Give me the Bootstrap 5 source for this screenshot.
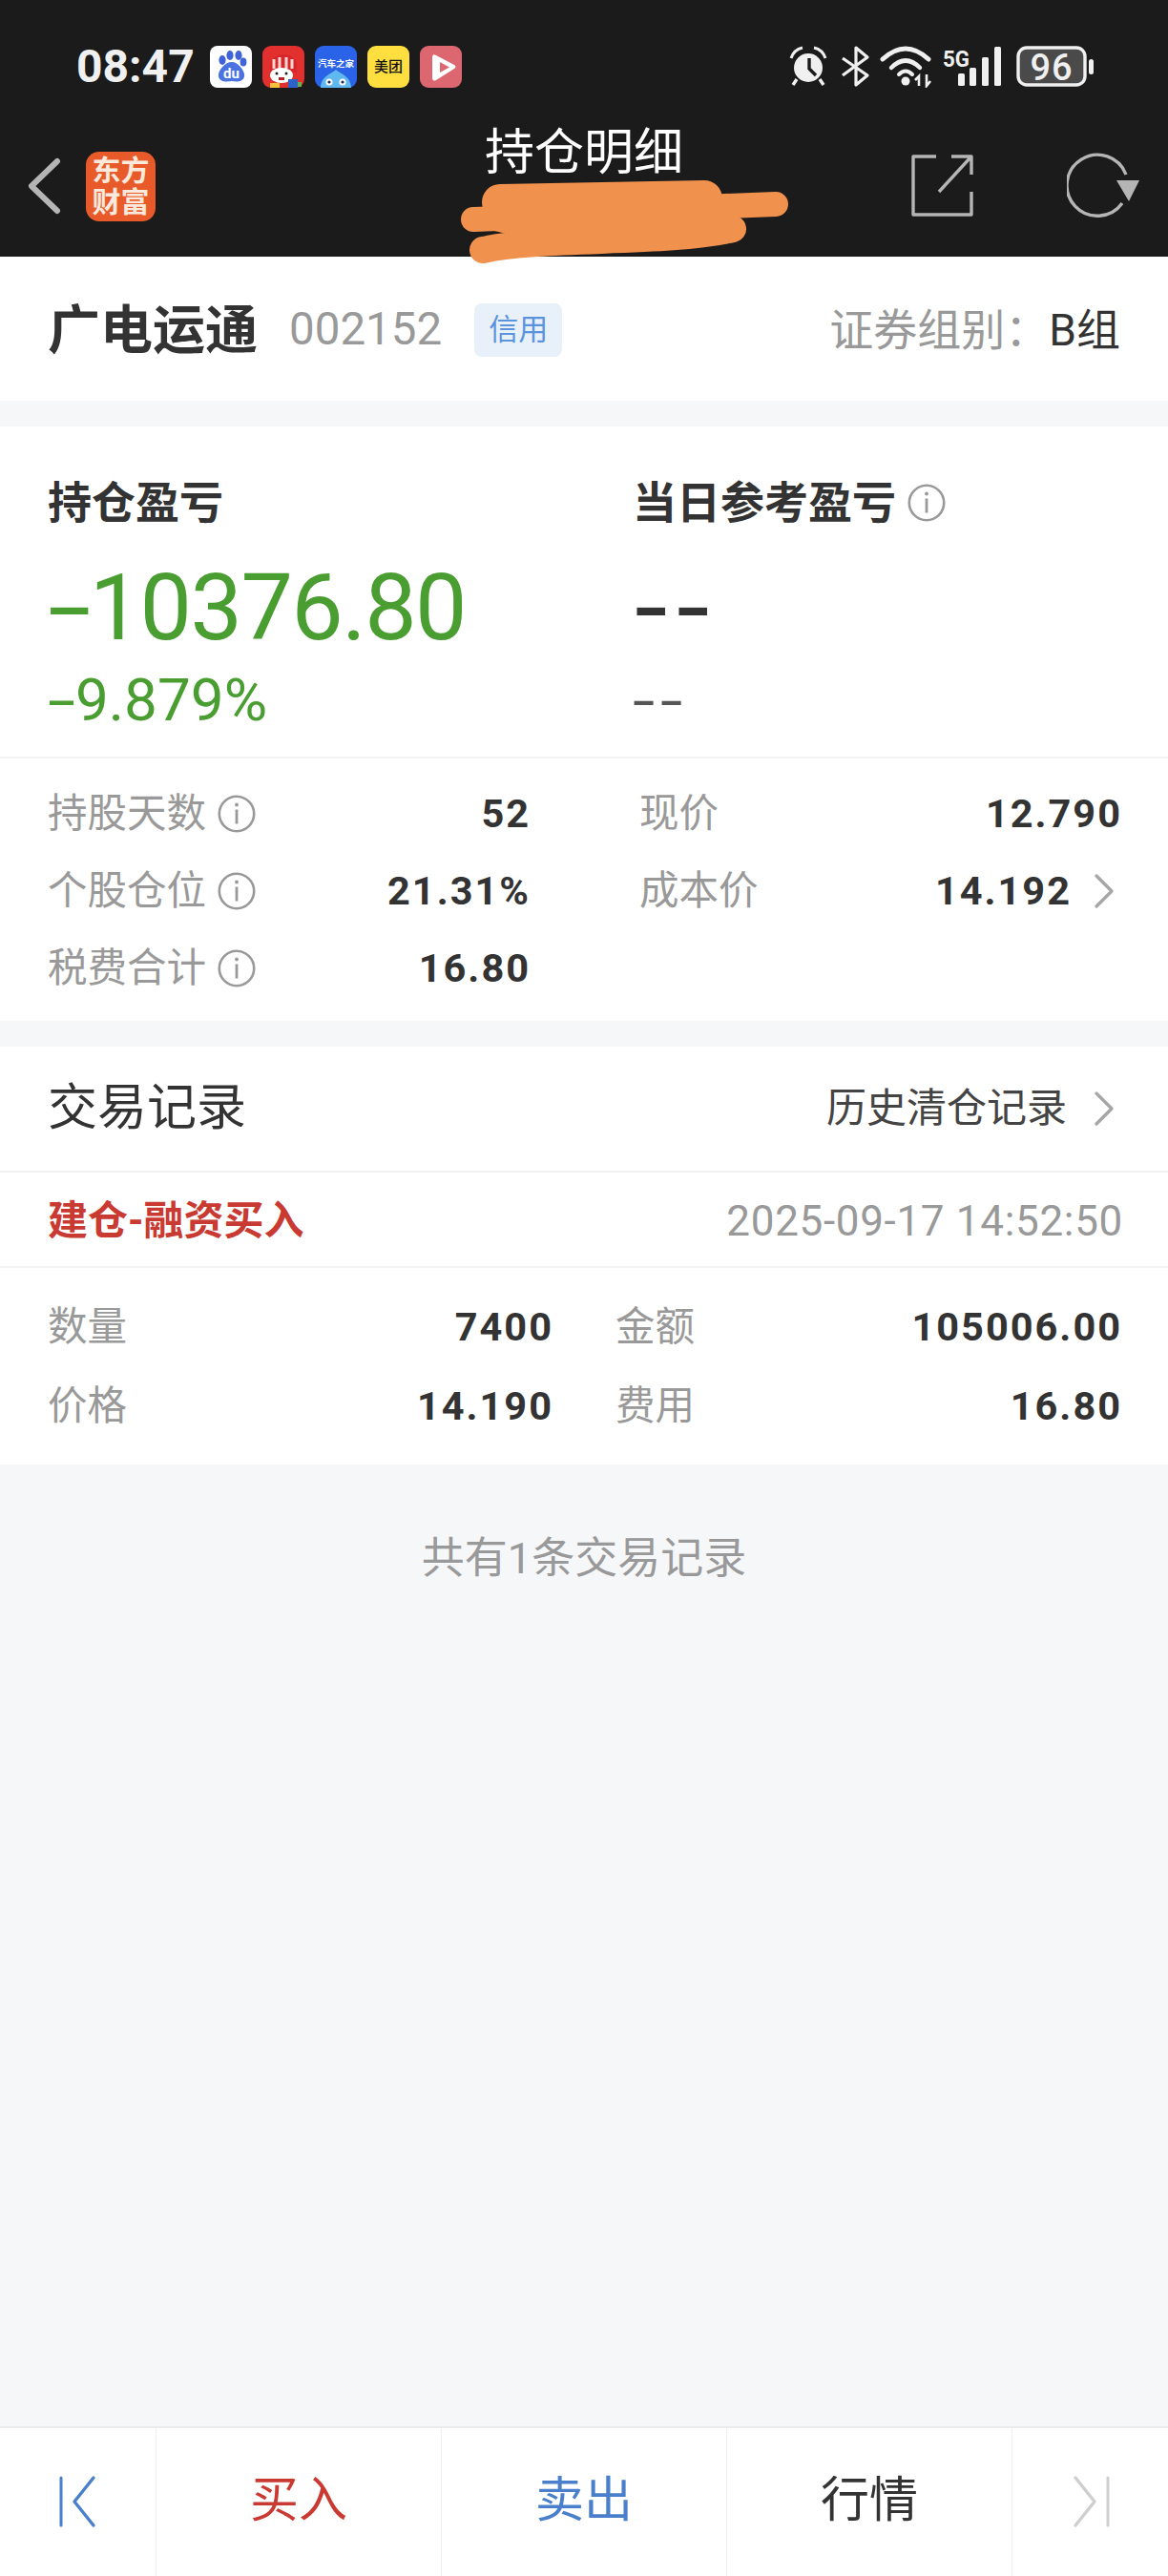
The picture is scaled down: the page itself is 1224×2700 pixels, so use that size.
<!DOCTYPE html>
<html lang="zh">

<head>
  <meta charset="UTF-8" />
  <meta name="viewport" content="width=device-width, initial-scale=1" />
  <title>持仓明细</title>
  <!-- Bootstrap CSS -->
  <link href="https://cdn.jsdelivr.net/npm/bootstrap@5.3.3/dist/css/bootstrap.min.css" rel="stylesheet">
  <style>
    body {
      background-color: #f6f7f9;
      font-family: Roboto, "Noto Sans CJK SC", sans-serif;
      color: #333;
    }

    .page-wrap {
      height: 2700px;
      position: relative;
      overflow: hidden;
    }

    /* top dark header */
    .top-head {
      background-color: #1b1b1b;
      height: 269px;
    }

    .status-line {
      height: 140px;
      padding: 0 77px 0 80px;
    }

    .clock-text {
      font-size: 48px;
      font-weight: 700;
      color: #f0f0f0;
      line-height: 1;
    }

    .app-tiles {
      gap: 11px;
      margin-left: 16px;
    }

    .app-tile {
      width: 44px;
      height: 44px;
      display: block;
    }

    .nav-line {
      height: 129px;
    }

    .nav-side {
      width: 300px;
      height: 129px;
      padding-bottom: 19px;
    }

    .nav-title {
      font-size: 52px;
      line-height: 60px;
      color: #fff;
      margin-top: -9px;
    }

    .back-icon {
      margin: 0 26px 0 28px;
    }

    .refresh-icon {
      margin: 0 30px 0 96px;
    }

    .scribble {
      position: absolute;
      left: 0;
      top: 0;
    }

    .logo-tile {
      width: 73px;
      height: 73px;
      background-color: #e85a2a;
      border-radius: 14px;
      color: #fbe9dc;
      font-size: 30px;
      font-weight: 700;
      line-height: 33px;
      text-align: center;
    }

    /* stock line */
    .stock-line {
      height: 151px;
      padding: 3px 50px 0;
    }

    .stock-name {
      font-size: 55px;
      font-weight: 700;
      line-height: 1;
    }

    .stock-code {
      font-size: 47.5px;
      color: #999;
      margin-left: 33px;
      line-height: 1;
    }

    .credit-tag {
      font-size: 31px;
      color: #5b94dd;
      background-color: #e8f1fa;
      border-radius: 8px;
      width: 92px;
      height: 56px;
      line-height: 56px;
      text-align: center;
      margin-left: 34px;
    }

    .group-text {
      font-size: 46px;
      color: #999;
      line-height: 1;
    }

    .group-val {
      color: #333;
    }

    .gap-band {
      height: 27px;
    }

    /* pnl panel */
    .pnl-block {
      height: 348px;
      padding: 50px 50px 0;
      border-bottom: 2px solid #f3f3f3;
    }

    .pnl-left {
      width: 613px;
    }

    .pnl-title {
      font-size: 46px;
      font-weight: 700;
      line-height: 60px;
    }

    .pnl-big {
      font-size: 97px;
      line-height: 110px;
      margin-top: 25px;
      color: #4a9e31;
      letter-spacing: -1.6px;
    }

    .pnl-sub {
      font-size: 62px;
      line-height: 70px;
      margin-top: 7px;
      color: #4a9e31;
    }

    /* the app draws its minus sign wider than the font does */
    .wide-dash {
      display: inline-block;
      transform: scaleX(1.7);
      transform-origin: left center;
      margin-right: .19em;
    }

    .dash-big {
      color: #333;
      font-weight: 500;
      letter-spacing: 4px;
      font-size: 88px;
      transform: scaleX(1.3);
      transform-origin: left center;
    }

    .dash-sub {
      color: #555;
      letter-spacing: 4px;
      font-size: 58px;
      transform: scaleX(1.45);
      transform-origin: left center;
    }

    .stat-block {
      padding: 17px 50px 15px;
    }

    .stat-line {
      height: 81px;
      gap: 116px;
    }

    .stat-cell {
      width: 504px;
    }

    .stat-label {
      font-size: 41.5px;
      color: #999;
      line-height: 1;
    }

    .stat-num {
      font-size: 41.5px;
      font-weight: 700;
      letter-spacing: 2px;
      line-height: 1;
      color: #333;
      margin-right: -2px;
    }

    .hint-icon {
      width: 40px;
      height: 40px;
      margin-left: 12px;
    }

    .go-icon {
      width: 24px;
      height: 40px;
      margin: 0 5px 0 24px;
    }

    /* trades */
    .trade-head {
      height: 132px;
      padding: 0 50px;
      border-bottom: 2px solid #f1f1f1;
    }

    .trade-title {
      font-size: 52px;
      line-height: 1;
    }

    .trade-more {
      font-size: 42px;
      color: #444;
      line-height: 1;
      margin-right: 3px;
    }

    .deal-line {
      height: 100px;
      padding: 3px 50px 0;
      border-bottom: 2px solid #f3f3f3;
    }

    .deal-name {
      font-size: 42px;
      font-weight: 700;
      color: #c93a32;
      line-height: 1;
    }

    .deal-time {
      font-size: 44px;
      color: #999;
      line-height: 1;
      letter-spacing: .68px;
      margin-right: -3px;
    }

    .deal-body {
      padding: 20px 50px;
    }

    .deal-row {
      height: 83px;
      gap: 67px;
    }

    .deal-cell {
      width: 529px;
    }

    .deal-row .deal-cell:first-child {
      width: 528px;
    }

    .count-note {
      font-size: 45px;
      color: #999;
      line-height: 60px;
      margin-top: 69px;
    }

    /* bottom bar */
    .foot-bar {
      position: absolute;
      left: 0;
      right: 0;
      bottom: 0;
      height: 157px;
      border-top: 2px solid #ececec;
    }

    .foot-cell {
      height: 100%;
      border-right: 1px solid #efefef;
      font-size: 51px;
      padding-bottom: 2px;
    }

    .foot-edge {
      width: 164px;
    }

    .foot-main {
      width: 299px;
    }

    .foot-last {
      flex: 1;
      border-right: 0;
    }

    .txt-buy {
      color: #c93a32;
    }

    .txt-sell {
      color: #4a7fcb;
    }
  </style>
</head>

<body>
  <svg width="0" height="0" class="position-absolute">
    <symbol id="hint" viewBox="0 0 40 40">
      <circle cx="20" cy="20" r="18.2" fill="none" stroke="#999" stroke-width="2.6" />
      <circle cx="20" cy="10.5" r="1.9" fill="#999" />
      <rect x="18.6" y="15.5" width="2.8" height="15" fill="#999" />
    </symbol>
    <symbol id="go" viewBox="0 0 24 40">
      <path d="M4 4 L20 20 L4 36" fill="none" stroke="#a6a6a6" stroke-width="3.4" stroke-linecap="round" stroke-linejoin="round" />
    </symbol>
  </svg>

  <div class="page-wrap d-flex flex-column">
    <!-- Header -->
    <div class="top-head">
      <div class="status-line d-flex align-items-center justify-content-between">
        <div class="d-flex align-items-center">
          <span class="clock-text">08:47</span>
          <div class="app-tiles d-flex">
            <svg class="app-tile" viewBox="0 0 44 44">
              <rect width="44" height="44" rx="8" fill="#fff" />
              <ellipse cx="13" cy="15" rx="3.6" ry="5" fill="#3f64d8" />
              <ellipse cx="21" cy="10" rx="3.6" ry="5" fill="#3f64d8" />
              <ellipse cx="30" cy="10" rx="3.6" ry="5" fill="#3f64d8" />
              <ellipse cx="35" cy="17" rx="3.4" ry="4.6" fill="#3f64d8" />
              <path d="M23 17 C30 17 37 27 36 32 C35 38 28 38 23 37 C17 38 10 38 9 32 C8 26 16 17 23 17 Z" fill="#4a72e0" />
              <text x="22.5" y="34" text-anchor="middle" font-family="Roboto" font-size="15" font-weight="700" fill="#fff">du</text>
            </svg>
            <svg class="app-tile" viewBox="0 0 44 44">
              <rect width="44" height="44" rx="9" fill="#e2302e" />
              <path d="M8 22 C8 8 30 4 36 18 L36 28 L8 28 Z" fill="#d5262c" />
              <path d="M12 14 V24 M18 12 V24 M25 12 V24 M31 14 V24" stroke="#ffd7d0" stroke-width="3" />
              <ellipse cx="20" cy="31" rx="12" ry="8" fill="#fff" />
              <circle cx="15" cy="29" r="1.5" fill="#222" />
              <circle cx="25" cy="29" r="1.5" fill="#222" />
              <path d="M17 33 h6 v3 h-6 z" fill="#b8202a" />
              <rect x="27" y="35" width="10" height="9" fill="#2e62c8" />
              <rect x="8" y="39" width="10" height="5" fill="#f0c23a" />
              <rect x="37" y="38" width="4" height="5" fill="#69b04c" />
            </svg>
            <svg class="app-tile" viewBox="0 0 44 44">
              <rect width="44" height="44" rx="9" fill="#2a63e8" />
              <text x="22" y="22" text-anchor="middle" font-family="Noto Sans CJK SC" font-size="9.5" font-weight="700" fill="#fff">汽车之家</text>
              <path d="M22 25 C26 29 38 32 38 44 H6 C6 32 18 29 22 25 Z" fill="#5fb8f0" />
              <circle cx="15" cy="38" r="3.6" fill="#fff" />
              <circle cx="29" cy="38" r="3.6" fill="#fff" />
              <circle cx="15" cy="38" r="1.6" fill="#16305f" />
              <circle cx="29" cy="38" r="1.6" fill="#16305f" />
            </svg>
            <svg class="app-tile" viewBox="0 0 44 44">
              <rect width="44" height="44" rx="9" fill="#ffdf3f" />
              <text x="22" y="27" text-anchor="middle" font-family="Noto Sans CJK SC" font-size="15" font-weight="500" fill="#111">美团</text>
            </svg>
            <svg class="app-tile" viewBox="0 0 44 44">
              <rect width="44" height="44" rx="9" fill="#dc6770" />
              <path d="M13 12 Q13 8 17 10 L36 20 Q39 22 36 24 L17 36 Q13 38 13 33 Z" fill="#fff" />
              <path d="M21 17 L31 22.5 L21 28 Z" fill="#dc6770" />
            </svg>
          </div>
        </div>
        <svg width="320" height="44" viewBox="0 0 320 44">
          <!-- alarm -->
          <circle cx="20" cy="23" r="15" fill="#f0f0f0" />
          <path d="M21 13 V24 L28 31" fill="none" stroke="#1b1b1b" stroke-width="3.4" />
          <path d="M2 13 Q5 4 14 2 M38 13 Q35 4 26 2" fill="none" stroke="#f0f0f0" stroke-width="3" />
          <path d="M8 35 L4 41 M32 35 L36 41" stroke="#f0f0f0" stroke-width="3.4" />
          <!-- bluetooth -->
          <path d="M56 13 L82 31 L70 41 V2 L82 12 L56 31" fill="none" stroke="#f0f0f0" stroke-width="3.2" stroke-linejoin="round" />
          <!-- wifi -->
          <path d="M98 14 Q122 -8 146 14" fill="none" stroke="#f0f0f0" stroke-width="5" stroke-linecap="round" />
          <path d="M107 23 Q122 8 137 23" fill="none" stroke="#f0f0f0" stroke-width="4.5" stroke-linecap="round" />
          <path d="M115 30 Q122 23 129 30" fill="none" stroke="#f0f0f0" stroke-width="4" stroke-linecap="round" />
          <circle cx="122" cy="37" r="4.5" fill="#f0f0f0" />
          <path d="M136 42 V32 L132 36 M144 30 V42 L148 37" fill="none" stroke="#f0f0f0" stroke-width="2.6" />
          <!-- 5G and bars -->
          <text x="161" y="22" font-family="Roboto" font-size="24" font-weight="700" textLength="28" lengthAdjust="spacingAndGlyphs" fill="#f0f0f0">5G</text>
          <rect x="177" y="29" width="7" height="13" rx="1.5" fill="#f0f0f0" />
          <rect x="189" y="23" width="7" height="19" rx="1.5" fill="#f0f0f0" />
          <rect x="202" y="12" width="7" height="30" rx="1.5" fill="#f0f0f0" />
          <rect x="215" y="1" width="7" height="41" rx="1.5" fill="#f0f0f0" />
          <!-- battery -->
          <rect x="240" y="2" width="70" height="39" rx="9" fill="#4a4a4a" stroke="#f0f0f0" stroke-width="3.4" />
          <text x="275" y="36" text-anchor="middle" font-family="Roboto" font-size="38" font-weight="500" fill="#f0f0f0" letter-spacing="1">96</text>
          <rect x="314" y="14" width="5" height="16" rx="2.5" fill="#f0f0f0" />
        </svg>
      </div>

      <div class="nav-line d-flex align-items-center justify-content-between">
        <div class="nav-side d-flex align-items-center">
          <svg width="36" height="60" viewBox="0 0 36 60" class="back-icon">
            <path d="M32 4 L5 30 L32 56" fill="none" stroke="#b5b5b5" stroke-width="6" stroke-linecap="round" stroke-linejoin="round" />
          </svg>
          <div class="logo-tile d-flex flex-column justify-content-center">
            <span>东方</span>
            <span>财富</span>
          </div>
        </div>
        <div class="nav-title align-self-start">持仓明细</div>
        <div class="nav-side d-flex align-items-center justify-content-end">
          <svg width="68" height="68" viewBox="0 0 68 68">
            <path d="M27 3 H3 V64 H64 V40 M43 3 H64 V22 M64 3 L30 40" fill="none" stroke="#b5b5b5" stroke-width="3.4" stroke-linejoin="round" />
          </svg>
          <svg width="76" height="72" viewBox="0 0 76 72" class="refresh-icon">
            <path d="M58 54 A32 32 0 1 1 62 24" fill="none" stroke="#b5b5b5" stroke-width="3.4" />
            <path d="M52 30 L76 30 L65 52 Z" fill="#b5b5b5" />
          </svg>
        </div>
      </div>
    </div>

    <!-- Orange scribble over the account name -->
    <svg class="scribble" width="1224" height="300" viewBox="0 0 1224 300">
      <g fill="none" stroke="#f0914d" stroke-linecap="round" stroke-linejoin="round">
        <path d="M524 212 L738 208" stroke-width="38" />
        <path d="M496 230 L620 226 L760 216 L813 214" stroke-width="26" />
        <path d="M506 262 C570 248 700 256 768 240" stroke-width="28" />
      </g>
      <path d="M520 205 L740 205 L770 240 L600 262 L510 240 Z" fill="#f0914d" />
    </svg>

    <!-- Stock line -->
    <div class="stock-line bg-white d-flex align-items-center justify-content-between">
      <div class="d-flex align-items-center">
        <span class="stock-name">广电运通</span>
        <span class="stock-code">002152</span>
        <span class="credit-tag">信用</span>
      </div>
      <div class="group-text">证券组别&#xFF1A;<span class="group-val">B组</span></div>
    </div>
    <div class="gap-band"></div>

    <!-- PnL -->
    <div class="pnl-block bg-white d-flex">
      <div class="pnl-left">
        <div class="pnl-title">持仓盈亏</div>
        <div class="pnl-big"><span class="wide-dash">-</span>10376.80</div>
        <div class="pnl-sub"><span class="wide-dash">-</span>9.879%</div>
      </div>
      <div>
        <div class="pnl-title d-flex align-items-center">当日参考盈亏
          <svg class="hint-icon"><use href="#hint" /></svg>
        </div>
        <div class="pnl-big dash-big">--</div>
        <div class="pnl-sub dash-sub">--</div>
      </div>
    </div>
    <div class="stat-block bg-white">
      <div class="stat-line d-flex">
        <div class="stat-cell d-flex align-items-center justify-content-between">
          <div class="d-flex align-items-center"><span class="stat-label">持股天数</span><svg class="hint-icon"><use href="#hint" /></svg></div>
          <span class="stat-num">52</span>
        </div>
        <div class="stat-cell d-flex align-items-center justify-content-between">
          <span class="stat-label">现价</span>
          <span class="stat-num">12.790</span>
        </div>
      </div>
      <div class="stat-line d-flex">
        <div class="stat-cell d-flex align-items-center justify-content-between">
          <div class="d-flex align-items-center"><span class="stat-label">个股仓位</span><svg class="hint-icon"><use href="#hint" /></svg></div>
          <span class="stat-num">21.31%</span>
        </div>
        <div class="stat-cell d-flex align-items-center justify-content-between">
          <span class="stat-label">成本价</span>
          <div class="d-flex align-items-center"><span class="stat-num">14.192</span><svg class="go-icon"><use href="#go" /></svg></div>
        </div>
      </div>
      <div class="stat-line d-flex">
        <div class="stat-cell d-flex align-items-center justify-content-between">
          <div class="d-flex align-items-center"><span class="stat-label">税费合计</span><svg class="hint-icon"><use href="#hint" /></svg></div>
          <span class="stat-num">16.80</span>
        </div>
      </div>
    </div>
    <div class="gap-band"></div>

    <!-- Trade records -->
    <div class="trade-head bg-white d-flex align-items-center justify-content-between">
      <span class="trade-title">交易记录</span>
      <div class="d-flex align-items-center"><span class="trade-more">历史清仓记录</span><svg class="go-icon"><use href="#go" /></svg></div>
    </div>
    <div class="deal-line bg-white d-flex align-items-center justify-content-between">
      <span class="deal-name">建仓-融资买入</span>
      <span class="deal-time">2025-09-17 14:52:50</span>
    </div>
    <div class="deal-body bg-white">
      <div class="deal-row d-flex">
        <div class="deal-cell d-flex align-items-center justify-content-between"><span class="stat-label">数量</span><span class="stat-num">7400</span></div>
        <div class="deal-cell d-flex align-items-center justify-content-between"><span class="stat-label">金额</span><span class="stat-num">105006.00</span></div>
      </div>
      <div class="deal-row d-flex">
        <div class="deal-cell d-flex align-items-center justify-content-between"><span class="stat-label">价格</span><span class="stat-num">14.190</span></div>
        <div class="deal-cell d-flex align-items-center justify-content-between"><span class="stat-label">费用</span><span class="stat-num">16.80</span></div>
      </div>
    </div>
    <div class="count-note text-center">共有1条交易记录</div>

    <!-- Bottom bar -->
    <div class="foot-bar bg-white d-flex">
      <div class="foot-cell foot-edge d-flex align-items-center justify-content-center">
        <svg width="44" height="56" viewBox="0 0 44 56">
          <path d="M4 3 V53" stroke="#4a7fcb" stroke-width="3" stroke-linecap="round" />
          <path d="M38 3 L18 28 L38 53" fill="none" stroke="#4a7fcb" stroke-width="3.4" stroke-linecap="round" stroke-linejoin="round" />
        </svg>
      </div>
      <div class="foot-cell foot-main d-flex align-items-center justify-content-center txt-buy">买入</div>
      <div class="foot-cell foot-main d-flex align-items-center justify-content-center txt-sell">卖出</div>
      <div class="foot-cell foot-main d-flex align-items-center justify-content-center">行情</div>
      <div class="foot-cell foot-last d-flex align-items-center justify-content-center">
        <svg width="44" height="56" viewBox="0 0 44 56">
          <path d="M40 3 V53" stroke="#cfcfcf" stroke-width="3" stroke-linecap="round" />
          <path d="M6 3 L26 28 L6 53" fill="none" stroke="#cfcfcf" stroke-width="3.4" stroke-linecap="round" stroke-linejoin="round" />
        </svg>
      </div>
    </div>
  </div>

  <!-- Bootstrap JS -->
  <script src="https://cdn.jsdelivr.net/npm/bootstrap@5.3.3/dist/js/bootstrap.bundle.min.js"></script>
</body>

</html>
